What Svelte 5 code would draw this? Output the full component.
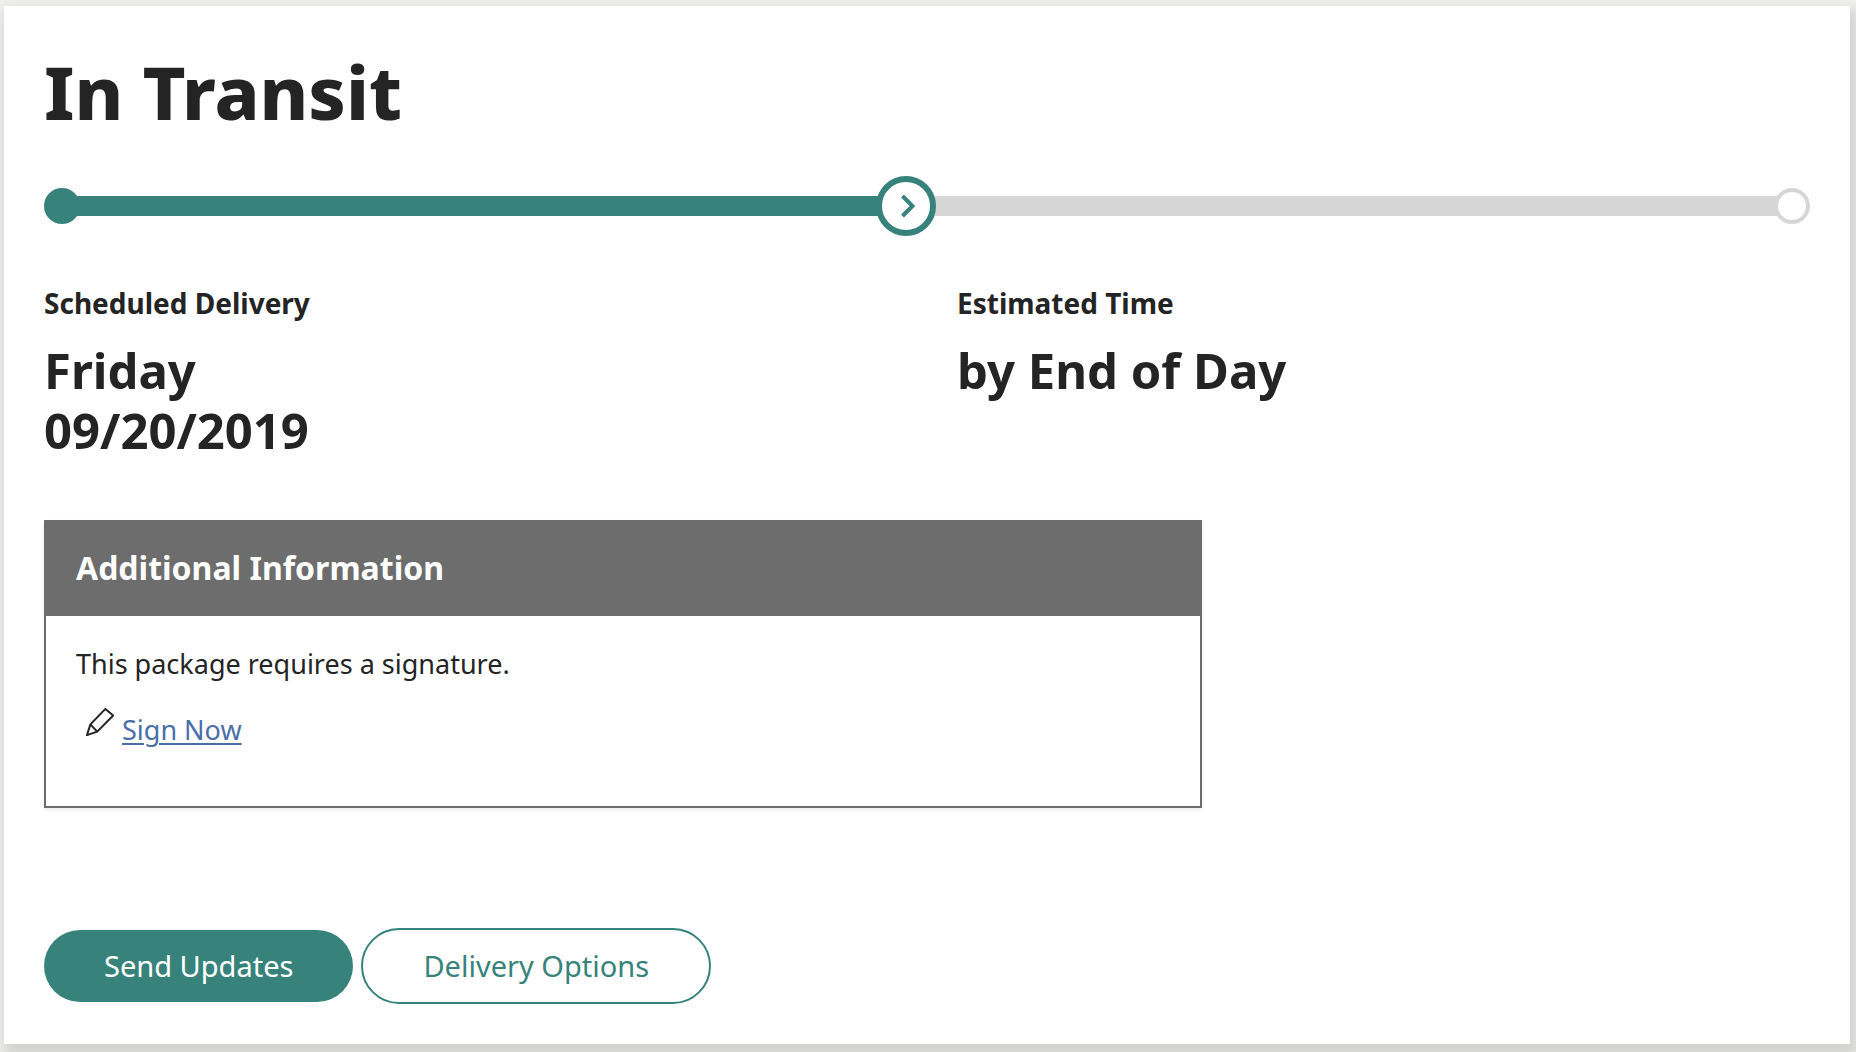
<script>
  const shipment = {
    status: 'In Transit',
    // share of the track on each side of the current step
    done: 19,
    left: 20
  };

  const details = [
    { label: 'Scheduled Delivery', lines: ['Friday', '09/20/2019'] },
    { label: 'Estimated Time', lines: ['by End of Day'] }
  ];
</script>

<main class="card">
  <h1>{shipment.status}</h1>

  <div class="track">
    <span class="stop start"></span>
    <span class="line done" style="flex-grow: {shipment.done}"></span>
    <span class="stop current">
      <svg viewBox="0 0 48 48" aria-hidden="true">
        <path d="M20.5 14L30.5 24L20.5 34" />
      </svg>
    </span>
    <span class="line" style="flex-grow: {shipment.left}"></span>
    <span class="stop end"></span>
  </div>

  <div class="details">
    {#each details as detail}
      <section>
        <h2>{detail.label}</h2>
        <p class="value">
          {#each detail.lines as line}
            <span>{line}</span>
          {/each}
        </p>
      </section>
    {/each}
  </div>

  <div class="info-row">
    <section class="info">
      <h2>Additional Information</h2>
      <div class="info-body">
        <p>This package requires a signature.</p>
        <div class="sign">
          <svg viewBox="0 0 28 28" aria-hidden="true">
            <path d="M19.4 0.9L27.2 7.5L11.2 23.6L0.9 27.1L4.4 16.4Z" />
            <path d="M4.4 16.4L11.2 23.6" />
          </svg>
          <a href="#sign">Sign Now</a>
        </div>
      </div>
    </section>
  </div>

  <div class="actions">
    <button type="button" class="primary">Send Updates</button>
    <button type="button" class="secondary">Delivery Options</button>
  </div>
</main>

<style>
  :global(body) {
    background: #efefed;
    color: #242424;
    font-family: "Noto Sans", Tahoma, Verdana, sans-serif;
  }

  .card {
    margin: 6px 6px 8px 4px;
    padding: 40px;
    background: #fff;
    box-shadow: 4px 8px 12px 4px rgba(0, 0, 0, 0.12);
  }

  h1, h2, p {
    margin: 0;
  }

  h1 {
    font-size: 74px;
    line-height: 92px;
    font-weight: 800;
  }

  .track {
    display: flex;
    align-items: center;
    margin-top: 38px;
  }

  .stop {
    position: relative;
    box-sizing: border-box;
    flex: none;
    width: 36px;
    height: 36px;
    border-radius: 50%;
    background: #fff;
  }

  .start {
    background: #37837c;
  }

  .current {
    width: 60px;
    height: 60px;
    border: 6px solid #37837c;
  }

  .end {
    border: 4px solid #d6d6d6;
  }

  .current svg {
    display: block;
    fill: none;
    stroke: #37837c;
    stroke-width: 4;
  }

  .line {
    flex: 1 1 0;
    height: 20px;
    margin: 0 -8px;
    background: #d6d6d6;
  }

  .line.done {
    background: #37837c;
  }

  .details {
    display: grid;
    grid-template-columns: 1fr 1fr;
    gap: 60px;
    margin-top: 48px;
  }

  .details h2 {
    font-size: 28px;
    line-height: 38px;
  }

  .value {
    margin-top: 18px;
    font-size: 49px;
    line-height: 60px;
    font-weight: 700;
  }

  .value span {
    display: block;
  }

  .info-row {
    display: grid;
    grid-template-columns: 2fr 1fr;
    gap: 29px;
    margin-top: 60px;
  }

  .info {
    border: 2px solid #6d6d6d;
    box-shadow: 0 2px 4px rgba(0, 0, 0, 0.08);
  }

  .info h2 {
    padding: 23px 30px 25px;
    background: #6d6d6d;
    color: #fff;
    font-size: 32px;
    line-height: 46px;
  }

  .info-body {
    padding: 28px 30px 54px;
    font-size: 27px;
    line-height: 40px;
  }

  .sign {
    display: flex;
    gap: 8px;
    margin-top: 24px;
    padding-left: 10px;
    line-height: 44px;
  }

  .sign svg {
    width: 28px;
    height: 28px;
    fill: none;
    stroke: #242424;
    stroke-width: 2;
    stroke-linejoin: round;
  }

  a {
    color: #4a6fa8;
    text-decoration-thickness: 2px;
    text-underline-offset: 3px;
  }

  .actions {
    display: flex;
    flex-wrap: wrap;
    align-items: center;
    gap: 8px;
    margin-top: 120px;
  }

  button {
    padding: 14px 60px;
    border: 0;
    border-radius: 38px;
    font-family: inherit;
    font-size: 29px;
    line-height: 44px;
  }

  .primary {
    background: #37837c;
    color: #fff;
  }

  .secondary {
    border: 2px solid #37837c;
    background: #fff;
    color: #37837c;
  }
</style>
